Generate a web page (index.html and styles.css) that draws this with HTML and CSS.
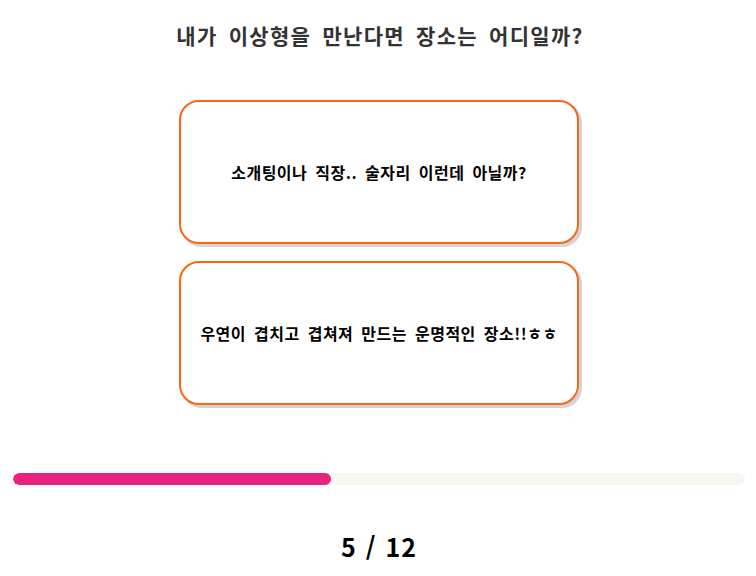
FILE: index.html
```html
<!DOCTYPE html>
<html lang="ko">
<head>
<meta charset="utf-8">
<link rel="stylesheet" href="styles.css">
</head>
<body>
<main class="page">
  <h1 class="question">내가 이상형을 만난다면 장소는 어디일까?</h1>
  <div class="answers">
    <button class="answer">소개팅이나 직장.. 술자리 이런데 아닐까?</button>
    <button class="answer">우연이 겹치고 겹쳐져 만드는 운명적인 장소!!ㅎㅎ</button>
  </div>
  <div class="progress"><div class="progress-fill" style="width:318px"></div></div>
  <div class="counter">5 / 12</div>
</main>
</body>
</html>
```
FILE: styles.css
```css
html, body {
  margin: 0;
  padding: 0;
  background: #fff;
}
body {
  font-family: "Noto Sans CJK KR", "Noto Sans", sans-serif;
  color: #000;
}
.page {
  width: 756px;
  display: flex;
  flex-direction: column;
  align-items: center;
}
.question {
  margin: 20px 0 0 0;
  font-size: 21px;
  font-weight: 700;
  line-height: 30px;
  letter-spacing: 1.3px;
  word-spacing: 4px;
  color: #333;
  padding-left: 4px;
}
.answers {
  margin-top: 50px;
  display: flex;
  flex-direction: column;
  gap: 17px;
  margin-left: 2px;
}
.answer {
  width: 400px;
  height: 144px;
  background: #fff;
  border: 2px solid #ff6414;
  border-radius: 20px;
  box-shadow: 3px 3px 0 #d4d4d4;
  font-family: inherit;
  font-size: 16px;
  font-weight: 700;
  letter-spacing: 0.5px;
  word-spacing: 3px;
  color: #000;
  padding: 0;
}
.progress {
  margin-top: 68px;
  width: 732px;
  height: 12px;
  border-radius: 6px;
  background: #f9f6f1;
  overflow: hidden;
  margin-left: 1px;
}
.progress-fill {
  height: 100%;
  background: #e8237f;
  border-radius: 6px;
}
.counter {
  margin-top: 43px;
  font-size: 25px;
  font-weight: 700;
  line-height: 36px;
  letter-spacing: 1px;
  word-spacing: 1px;
  color: #000;
  padding-left: 2px;
}
```
